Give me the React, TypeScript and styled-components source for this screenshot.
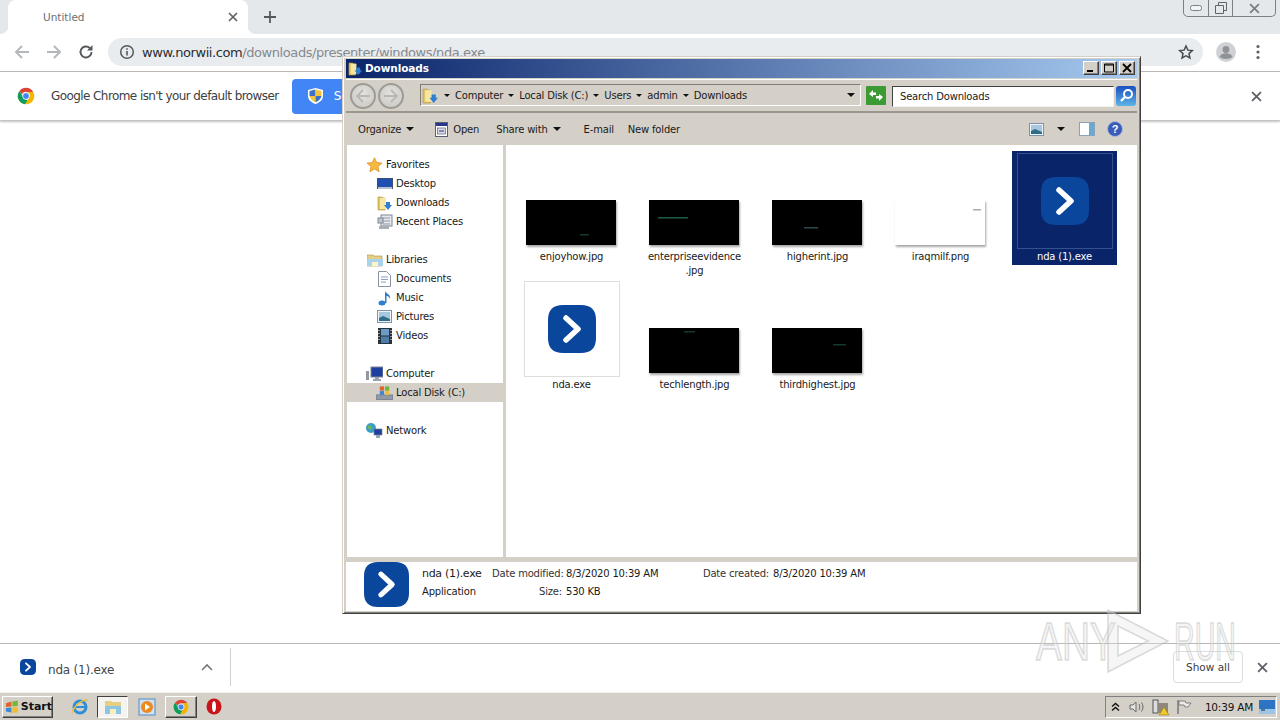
import React from "react";
import styled, { createGlobalStyle, css } from "styled-components";

const Global = createGlobalStyle`
  html, body { margin: 0; padding: 0; background: #fff; }
  * { box-sizing: border-box; }
  body { font-family: "Liberation Sans", Arial, sans-serif; }
`;

const UI = `"DejaVu Sans", "Liberation Sans", sans-serif`;
const raised = css`
  border: 1px solid;
  border-color: #fff #404040 #404040 #fff;
  box-shadow: inset -1px -1px 0 #808080;
`;

const Page = styled.div`
  position: relative;
  width: 1280px;
  height: 720px;
  overflow: hidden;
  display: flex;
  flex-direction: column;
  background: #fff;
  color: #222;
`;

/* Chrome */
const TabStrip = styled.div`
  height: 34px;
  flex: none;
  background: #e5e8eb;
  display: flex;
  align-items: flex-start;
  padding-left: 8px;
`;
const Tab = styled.div`
  position: relative;
  width: 240px;
  height: 34px;
  background: #fff;
  border-radius: 8px 8px 0 0;
  display: flex;
  align-items: center;
  padding: 0 10px 0 35px;
  color: #6b6f74;
  font-family: ${UI};
  font-size: 10.5px;
  &::before, &::after {
    content: "";
    position: absolute;
    bottom: 0;
    width: 8px;
    height: 8px;
  }
  &::before { left: -8px; background: radial-gradient(circle at 0 0, #e5e8eb 8px, #fff 8.5px); }
  &::after { right: -8px; background: radial-gradient(circle at 100% 0, #e5e8eb 8px, #fff 8.5px); }
`;
const TabTitle = styled.span` flex: 1; `;
const NewTab = styled.div`
  width: 16px;
  height: 34px;
  margin-left: 14px;
  display: flex;
  align-items: center;
  justify-content: center;
`;
const WinControls = styled.div`
  margin-left: auto;
  margin-right: 4px;
  width: 93px;
  height: 17px;
  border: 1px solid #7b8085;
  border-top: none;
  border-radius: 0 0 5px 5px;
  display: grid;
  grid-template-columns: 25px 24px 1fr;
`;
const WinCell = styled.div<{ $div?: boolean }>`
  display: flex;
  align-items: center;
  justify-content: center;
  ${(p) => p.$div && "border-right: 1px solid #7b8085;"}
`;
const Toolbar = styled.div`
  height: 38px;
  flex: none;
  background: #fff;
  border-bottom: 1px solid #bcbcbc;
  display: flex;
  align-items: flex-start;
  padding: 4px 0 0 6px;
`;
const NavIcon = styled.div<{ $w?: number }>`
  width: ${(p) => p.$w ?? 32}px;
  height: 28px;
  display: flex;
  align-items: center;
  justify-content: center;
  flex: none;
`;
const Pill = styled.div`
  margin-left: 6px;
  width: 1095px;
  height: 28px;
  border-radius: 14px;
  background: #e9ecef;
  display: flex;
  align-items: center;
  padding: 0 9px 0 11px;
`;
const Url = styled.div`
  flex: 1;
  margin-left: 7px;
  font-family: "DejaVu Sans", sans-serif;
  font-size: 13px;
  letter-spacing: -0.42px;
  color: #85898e;
  white-space: nowrap;
  b { font-weight: 400; color: #2b2d30; }
`;
const InfoBar = styled.div`
  height: 49px;
  flex: none;
  display: flex;
  align-items: center;
  padding: 0 16px 0 17px;
  background: #fff;
  border-bottom: 1px solid #c4c4c4;
  box-shadow: 0 1px 2px rgba(0, 0, 0, 0.25);
  font-family: ${UI};
  position: relative;
`;
const InfoText = styled.div`
  margin-left: 16px;
  font-size: 12px;
  letter-spacing: -0.58px;
  color: #3c4043;
  white-space: nowrap;
`;
const SetDefault = styled.div`
  margin-left: 13px;
  width: 140px;
  height: 35px;
  border-radius: 4px;
  background: #4285f4;
  color: #fff;
  display: flex;
  align-items: center;
  padding-left: 16px;
  font-size: 12px;
  gap: 11px;
`;
const InfoClose = styled.div`
  margin-left: auto;
  width: 16px;
  display: flex;
  justify-content: center;
`;
const Content = styled.div` flex: 1; background: #fff; `;

const DownloadBar = styled.div`
  height: 49px;
  flex: none;
  border-top: 1px solid #b8b8b8;
  display: flex;
  align-items: center;
  padding: 0 10px 2px 20px;
  font-family: ${UI};
`;
const DownloadName = styled.div`
  margin-left: 12px;
  width: 153px;
  padding-top: 5px;
  font-size: 12px;
  letter-spacing: -0.2px;
  color: #44474b;
`;
const Separator = styled.div`
  width: 1px;
  height: 38px;
  background: #d0d0d0;
  margin-left: 17px;
`;
const ShowAll = styled.div`
  margin-left: auto;
  width: 70px;
  height: 32px;
  border: 1px solid #dadce0;
  border-radius: 4px;
  display: flex;
  align-items: center;
  justify-content: center;
  font-size: 10.5px;
  color: #3c4043;
`;
const BarClose = styled.div`
  margin-left: 11px;
  width: 16px;
  display: flex;
  justify-content: center;
`;

/* Taskbar */
const Taskbar = styled.div`
  height: 28px;
  flex: none;
  background: #d4d0c8;
  border-top: 1px solid #f4f2ee;
  display: flex;
  align-items: center;
  padding: 0 3px 0 2px;
  font-family: ${UI};
`;
const StartBtn = styled.div`
  ${raised}
  width: 51px;
  height: 22px;
  display: flex;
  align-items: center;
  gap: 1px;
  padding-left: 2px;
  font-size: 11px;
  font-weight: 700;
  color: #111;
`;
const TaskItem = styled.div<{ $w: number; $gap: number; $state?: "on" | "off" }>`
  width: ${(p) => p.$w}px;
  height: 22px;
  margin-left: ${(p) => p.$gap}px;
  display: flex;
  align-items: center;
  justify-content: center;
  ${(p) => p.$state === "off" && raised}
  ${(p) =>
    p.$state === "on" &&
    css`
      border: 1px solid;
      border-color: #404040 #fff #fff #404040;
      background: #f5f3ef;
    `}
`;
const Tray = styled.div`
  margin-left: auto;
  width: 172px;
  height: 22px;
  border: 1px solid;
  border-color: #808080 #fff #fff #808080;
  display: flex;
  align-items: center;
  font-size: 10.5px;
  color: #111;
`;
const TrayIcon = styled.div<{ $w: number }>`
  width: ${(p) => p.$w}px;
  height: 18px;
  flex: none;
  display: flex;
  align-items: center;
  justify-content: center;
`;
const Clock = styled.div`
  width: 58px;
  margin-left: 4px;
  text-align: center;
  white-space: nowrap;
  letter-spacing: -0.2px;
`;

/* Explorer */
const Win = styled.div`
  position: absolute;
  left: 342px;
  top: 56px;
  width: 799px;
  height: 558px;
  background: #d4d0c8;
  border: 1px solid;
  border-color: #d4d0c8 #404040 #404040 #d4d0c8;
  box-shadow: inset 1px 1px 0 #fff, inset -1px -1px 0 #808080;
  padding: 2px 3px 2px 3px;
  display: flex;
  flex-direction: column;
  font-family: ${UI};
  font-size: 10px;
  letter-spacing: -0.19px;
  color: #1a1a1a;
`;
const Title = styled.div`
  height: 19px;
  flex: none;
  background: linear-gradient(90deg, #0a246a, #a6caf0);
  color: #fff;
  font-weight: 700;
  font-size: 10.5px;
  letter-spacing: -0.1px;
  display: flex;
  align-items: center;
  padding: 0 2px 1px 2px;
  gap: 2px;
`;
const TitleText = styled.span` flex: 1; `;
const TitleBtn = styled.div`
  ${raised}
  width: 16px;
  height: 14px;
  background: #d4d0c8;
  display: flex;
  align-items: center;
  justify-content: center;
`;
const NavBar = styled.div`
  height: 34px;
  flex: none;
  margin-top: 1px;
  border-top: 1px solid #fff;
  border-bottom: 2px solid #9a968e;
  display: flex;
  align-items: center;
  padding: 0 3px 1px 4px;
`;
const Round = styled.div<{ $gap?: number }>`
  width: 26px;
  height: 26px;
  margin-left: ${(p) => p.$gap ?? 0}px;
  margin-top: 2px;
  border-radius: 50%;
  border: 2px solid #9d9b96;
  background: radial-gradient(circle at 50% 40%, #e4e2de, #c9c6c0);
  display: flex;
  align-items: center;
  justify-content: center;
  flex: none;
`;
const Address = styled.div`
  margin-left: 16px;
  width: 441px;
  height: 22px;
  border: 1px solid;
  border-color: #807c74 #fff #fff #807c74;
  display: flex;
  align-items: center;
  padding: 0 3px 0 1px;
  font-size: 10px;
  flex: none;
`;
const Crumb = styled.span`
  display: inline-flex;
  align-items: center;
  gap: 5px;
  margin-left: 5px;
  white-space: nowrap;
`;
const Caret = styled.span<{ $size?: number; $ml?: number }>`
  display: inline-block;
  flex: none;
  margin-left: ${(p) => p.$ml ?? 0}px;
  border-left: ${(p) => p.$size ?? 3}px solid transparent;
  border-right: ${(p) => p.$size ?? 3}px solid transparent;
  border-top: ${(p) => p.$size ?? 3}px solid #111;
`;
const RefreshSlot = styled.div`
  margin-left: 5px;
  width: 20px;
  height: 19px;
  flex: none;
  line-height: 0;
`;
const Search = styled.div`
  margin: 2px 0 0 6px;
  width: 222px;
  height: 21px;
  background: #fff;
  border: 1px solid;
  border-color: #404040 #f4f4f4 #f4f4f4 #404040;
  display: flex;
  align-items: center;
  padding-left: 7px;
  flex: none;
`;
const SearchSlot = styled.div`
  margin: 1px 0 0 2px;
  width: 20px;
  height: 20px;
  flex: none;
  line-height: 0;
`;
const Commands = styled.div`
  height: 32px;
  flex: none;
  display: flex;
  align-items: center;
  padding: 0 14px 0 12px;
`;
const Cmd = styled.div<{ $gap?: number }>`
  display: flex;
  align-items: center;
  gap: 5px;
  margin-left: ${(p) => p.$gap ?? 0}px;
  white-space: nowrap;
`;
const CmdSpacer = styled.div` flex: 1; `;
const Body = styled.div`
  flex: 1;
  min-height: 0;
  display: flex;
  gap: 3px;
  padding-left: 1px;
`;
const Side = styled.div`
  width: 156px;
  background: #fff;
  padding-top: 10px;
  flex: none;
`;
const SideRow = styled.div<{ $child?: boolean; $sel?: boolean }>`
  height: 19px;
  display: flex;
  align-items: center;
  gap: 3px;
  padding-left: ${(p) => (p.$child ? 29 : 19)}px;
  ${(p) => p.$sel && "background: #d4d0c8;"}
`;
const SideIcon = styled.span`
  width: 17px;
  height: 16px;
  flex: none;
  display: flex;
  align-items: center;
  justify-content: center;
`;
const Files = styled.div`
  flex: 1;
  background: #fff;
  padding: 6px 0 0 4px;
  display: grid;
  grid-template-columns: repeat(4, 123px) 125px;
  grid-auto-rows: 128px;
  align-content: start;
`;
const Tile = styled.div<{ $sel?: boolean }>`
  width: 105px;
  height: 114px;
  justify-self: center;
  display: flex;
  flex-direction: column;
  align-items: center;
  padding-top: 2px;
  ${(p) => p.$sel && "background: #0a246a; color: #fff;"}
`;
const Frame = styled.div<{ $line?: "plain" | "sel" }>`
  width: 96px;
  height: 96px;
  flex: none;
  display: flex;
  align-items: center;
  justify-content: center;
  border: 1px solid transparent;
  ${(p) => p.$line === "plain" && "border-color: #dedede;"}
  ${(p) => p.$line === "sel" && "border-color: #33508f;"}
`;
const ThumbFrame = styled(Frame)`
  align-items: flex-end;
  padding: 0 2px 3px 0;
`;
const Thumb = styled.div<{ $bg?: string }>`
  width: 90px;
  height: 45px;
  background: ${(p) => p.$bg ?? "#000"};
  box-shadow: 1px 2px 2px rgba(0, 0, 0, 0.35);
  line-height: 0;
`;
const Label = styled.div`
  padding-top: 1px;
  line-height: 14px;
  text-align: center;
  white-space: nowrap;
`;
const StatusBar = styled.div`
  height: 53px;
  flex: none;
  margin-top: 1px;
  background: #fff;
  border-top: 4px solid #d4d0c8;
  display: flex;
  padding: 0 0 0 18px;
`;
const StatusGrid = styled.div`
  margin-left: 13px;
  display: grid;
  grid-template-columns: 70px 74px 136px 71px auto;
  grid-auto-rows: 18px;
  margin-top: 2px;
  align-items: center;
  white-space: nowrap;
`;
const StatusName = styled.div` font-size: 11px; letter-spacing: -0.3px; `;
const StatusKey = styled.div`
  text-align: right;
  padding-right: 4px;
  color: #333;
`;

/* Watermark */
const Watermark = styled.div`
  position: absolute;
  left: 1036px;
  top: 608px;
  width: 198px;
  height: 66px;
  display: flex;
  align-items: center;
  justify-content: space-between;
  pointer-events: none;
  font-family: "Liberation Sans", sans-serif;
  font-size: 54px;
  color: rgba(228, 228, 228, 0.35);
  -webkit-text-stroke: 1.6px rgba(190, 190, 190, 0.55);
`;
const MarkText = styled.span<{ $w: number; $scale: number }>`
  display: inline-block;
  width: ${(p) => p.$w}px;
  transform: scaleX(${(p) => p.$scale});
  transform-origin: left center;
  white-space: nowrap;
`;
const MarkLogo = styled.svg`
  position: absolute;
  left: 64px;
  top: 0;
`;

/* Icons */
const AppIcon = ({ size, fill = "#0a469c" }: { size: number; fill?: string }) => (
  <svg width={size} height={size} viewBox="0 0 48 48">
    <path d="M15 0h18c10 0 15 5 15 15v18c0 10-5 15-15 15H15C5 48 0 43 0 33V15C0 5 5 0 15 0z" fill={fill} />
    <path d="M18 13l12 11-12 11" fill="none" stroke="#fff" strokeWidth="5.5" strokeLinecap="round" strokeLinejoin="round" />
  </svg>
);
const Arrow = ({ dir, color }: { dir: "l" | "r"; color: string }) => (
  <svg width="16" height="16" viewBox="0 0 16 16" style={{ transform: dir === "r" ? "scaleX(-1)" : undefined }}>
    <path d="M15 8H2M8 2L2 8l6 6" fill="none" stroke={color} strokeWidth="1.9" />
  </svg>
);
const XIcon = ({ c = "#5f6368", s = 10 }: { c?: string; s?: number }) => (
  <svg width={s} height={s} viewBox="0 0 10 10">
    <path d="M1 1l8 8M9 1L1 9" stroke={c} strokeWidth="1.7" />
  </svg>
);
const ChromeLogo = ({ s = 18 }: { s?: number }) => (
  <svg width={s} height={s} viewBox="0 0 48 48">
    <path d="M24 2a22 22 0 0 1 19 11H24a11 11 0 0 0-10.5 7.5L6.6 10.5A22 22 0 0 1 24 2z" fill="#db4437" />
    <path d="M6.6 10.5l10 17A11 11 0 0 0 29 34.5L22 46A22 22 0 0 1 6.6 10.5z" fill="#0f9d58" />
    <path d="M43 13a22 22 0 0 1-21 33l9.5-16.5A11 11 0 0 0 33 17.5L24 13z" fill="#f4b400" />
    <circle cx="24" cy="24" r="9" fill="#4285f4" stroke="#fff" strokeWidth="2" />
  </svg>
);
const Folder = ({ s = 16, arrow = true }: { s?: number; arrow?: boolean }) => (
  <svg width={s} height={s} viewBox="0 0 16 16">
    <path d="M1 2h4l1 1h2v12H1z" fill="#e3c565" stroke="#b0913a" strokeWidth=".6" />
    <path d="M3 3h6v11H3z" fill="#f7e7a4" />
    {arrow && <path d="M9 7h4v3h2l-4 5-4-5h2z" fill="#2f7fd0" />}
  </svg>
);
const Shield = () => (
  <svg width="15" height="16" viewBox="0 0 15 16">
    <path d="M7.5 0L15 2v6c0 4-3.5 6.5-7.5 8C3.5 14.5 0 12 0 8V2z" fill="#fff" />
    <path d="M7.5 1.500V8H1.500V3z" fill="#3b6fc9" />
    <path d="M7.5 1.500L13.500 3V8H7.500z" fill="#f2c53d" />
    <path d="M1.500 8h6v6.200C4.500 13 2 11 1.500 8z" fill="#f2c53d" />
    <path d="M7.500 8h6c-.5 3-3 5-6 6.200z" fill="#3b6fc9" />
  </svg>
);
const Star = () => (
  <svg width="16" height="16" viewBox="0 0 24 24">
    <path d="M12 3l2.800 6.200 6.700.7-5 4.500 1.400 6.600L12 17.600 6.100 21l1.400-6.600-5-4.500 6.700-.7z" fill="none" stroke="#45484c" strokeWidth="2.200" />
  </svg>
);
const Avatar = () => (
  <svg width="20" height="20" viewBox="0 0 20 20">
    <circle cx="10" cy="10" r="10" fill="#cfd1d4" />
    <circle cx="10" cy="7.500" r="3.400" fill="#8f9296" />
    <path d="M3.500 15c1-3 4-3.800 6.500-3.800s5.500.8 6.500 3.800c-3 2.500-10 2.500-13 0z" fill="#8f9296" />
  </svg>
);
const Dots = () => (
  <svg width="4" height="16" viewBox="0 0 4 16">
    <circle cx="2" cy="2.500" r="1.600" fill="#5f6368" />
    <circle cx="2" cy="8" r="1.600" fill="#5f6368" />
    <circle cx="2" cy="13.500" r="1.600" fill="#5f6368" />
  </svg>
);
const Reload = () => (
  <svg width="16" height="16" viewBox="0 0 16 16">
    <path d="M13.500 8a5.500 5.500 0 1 1-1.700-4" fill="none" stroke="#55585c" strokeWidth="1.900" />
    <path d="M14.500 1v5.500H9z" fill="#55585c" />
  </svg>
);
const Info = () => (
  <svg width="16" height="16" viewBox="0 0 16 16">
    <circle cx="8" cy="8" r="6.300" fill="none" stroke="#55585c" strokeWidth="1.500" />
    <path d="M8 7v4.500M8 4.200v1.600" stroke="#55585c" strokeWidth="1.600" />
  </svg>
);
const Chevron = () => (
  <svg width="12" height="8" viewBox="0 0 12 8">
    <path d="M1 7l5-5 5 5" fill="none" stroke="#777" strokeWidth="1.600" />
  </svg>
);
const Plus = () => (
  <svg width="12" height="12" viewBox="0 0 12 12">
    <path d="M6 0v12M0 6h12" stroke="#55585c" strokeWidth="1.800" />
  </svg>
);
const FavStar = () => (
  <svg width="17" height="16" viewBox="0 0 24 24">
    <path d="M12 1l3.300 7.300 8 .8-6 5.300 1.700 7.800L12 18l-7 4.200 1.700-7.800-6-5.300 8-.8z" fill="#f6b93b" stroke="#d48a1f" strokeWidth="1" />
  </svg>
);
const Monitor = ({ c = "#1f4fb0" }: { c?: string }) => (
  <svg width="16" height="14" viewBox="0 0 16 14">
    <rect x="0" y="1" width="16" height="11" fill="#3d4f6e" />
    <rect x="1" y="2" width="14" height="8" fill={c} />
    <rect x="1" y="10" width="14" height="2" fill="#b9c2d0" />
  </svg>
);
const DocIcon = () => (
  <svg width="13" height="16" viewBox="0 0 13 16">
    <path d="M.5.500h8l4 4v11H.5z" fill="#fff" stroke="#8a93a3" />
    <path d="M3 6h7M3 8.500h7M3 11h5" stroke="#8ea0bc" />
  </svg>
);
const MusicIcon = () => (
  <svg width="14" height="16" viewBox="0 0 14 16">
    <ellipse cx="4" cy="13" rx="3.500" ry="2.500" fill="#2e7fcf" />
    <path d="M7 13V1c1 3 6 3 5 8-1-3-3-3-3.500-3V13z" fill="#2e7fcf" />
  </svg>
);
const PicIcon = ({ s = 15 }: { s?: number }) => (
  <svg width={s} height={s - 2} viewBox="0 0 15 13">
    <rect x=".5" y=".5" width="14" height="12" fill="#eef3f8" stroke="#7d93ab" />
    <rect x="2" y="2" width="11" height="9" fill="#a9c6e0" />
    <path d="M2 8l4-2 7 3v2H2z" fill="#2f6d88" />
  </svg>
);
const VideoIcon = () => (
  <svg width="14" height="16" viewBox="0 0 14 16">
    <rect width="14" height="16" fill="#27333f" />
    <rect x="3" y="1" width="8" height="6.500" fill="#6d9bc4" />
    <rect x="3" y="8.500" width="8" height="6.500" fill="#4e7da6" />
    <path d="M1 2v1M1 5v1M1 8v1M1 11v1M13 2v1M13 5v1M13 8v1M13 11v1" stroke="#fff" />
  </svg>
);
const LibIcon = () => (
  <svg width="16" height="14" viewBox="0 0 16 14">
    <path d="M0 2h6l1 1h8v10H0z" fill="#e4cf85" stroke="#a89248" strokeWidth=".6" />
    <path d="M0 6h16v7H0z" fill="#a9d3ea" />
    <path d="M5 13V9h6v4" fill="#fdf5c9" />
  </svg>
);
const RecentIcon = () => (
  <svg width="16" height="16" viewBox="0 0 16 16">
    <rect x="4" y="1" width="11" height="11" fill="#e6e8ec" stroke="#7f8895" />
    <path d="M6 4h7M6 7h7M6 10h7" stroke="#8e99a8" />
    <rect x="1" y="4" width="5" height="5" fill="#bfc6d0" stroke="#7f8895" />
    <rect x="2" y="12" width="10" height="3" fill="#a8afb9" />
  </svg>
);
const ComputerIcon = () => (
  <svg width="17" height="16" viewBox="0 0 17 16">
    <rect x="0" y="5" width="3" height="9" fill="#8f97a3" />
    <rect x="5" y="1" width="12" height="10" fill="#1d3f9e" stroke="#7d8592" />
    <path d="M9 11h4v2h2v2H7v-2h2z" fill="#9aa2ae" />
  </svg>
);
const DiskIcon = () => (
  <svg width="18" height="16" viewBox="0 0 18 16">
    <rect x="0" y="10" width="18" height="5" fill="#8f9aa6" stroke="#5e6772" strokeWidth=".6" />
    <rect x="4" y="1" width="4.500" height="4.500" fill="#e0662f" />
    <rect x="9.500" y="1" width="4.500" height="4.500" fill="#6fb33b" />
    <rect x="4" y="6" width="4.500" height="4" fill="#3f83d6" />
    <rect x="9.500" y="6" width="4.500" height="4" fill="#f0bf32" />
  </svg>
);
const NetworkIcon = () => (
  <svg width="17" height="16" viewBox="0 0 17 16">
    <circle cx="5" cy="5" r="5" fill="#3b9dc9" />
    <path d="M2 3c2-1 4 0 4 2s-3 2-4 0z" fill="#69b85a" />
    <rect x="8" y="6" width="8" height="6" fill="#1d3f9e" stroke="#7d8592" strokeWidth=".7" />
    <rect x="10" y="12" width="4" height="3" fill="#9aa2ae" />
  </svg>
);
const OpenIcon = () => (
  <svg width="13" height="15" viewBox="0 0 13 15">
    <rect x=".5" y=".5" width="12" height="14" fill="#fff" stroke="#5d5d70" />
    <rect x="1" y="1" width="11" height="3" fill="#27378c" />
    <rect x="2.500" y="6" width="8" height="6" fill="#d9d9e4" stroke="#5d5d70" strokeWidth=".7" />
    <path d="M4 9h5" stroke="#27378c" />
  </svg>
);
const Refresh = () => (
  <svg width="20" height="19" viewBox="0 0 20 19">
    <rect width="20" height="19" rx="1" fill="#3c9a35" />
    <path d="M3 8l4-4v2.500h3V9H7v2zM17 11l-4 4v-2.500h-3V10h3V8z" fill="#fff" />
  </svg>
);
const SearchBtn = () => (
  <svg width="20" height="20" viewBox="0 0 20 20">
    <defs>
      <linearGradient id="sb" x1="0" x2="0" y1="0" y2="1">
        <stop offset="0" stopColor="#1a4fc0" />
        <stop offset="1" stopColor="#5db4e8" />
      </linearGradient>
    </defs>
    <rect width="20" height="20" rx="3" fill="url(#sb)" />
    <circle cx="12" cy="8" r="4" fill="none" stroke="#fff" strokeWidth="2" />
    <path d="M9 11l-4 4" stroke="#fff" strokeWidth="2.400" />
  </svg>
);
const Help = () => (
  <svg width="16" height="16" viewBox="0 0 16 16">
    <circle cx="8" cy="8" r="7.500" fill="#3a5bb8" stroke="#a8b6dd" />
    <text x="8" y="12" textAnchor="middle" fontSize="11" fontWeight="700" fill="#fff" fontFamily="Liberation Sans">?</text>
  </svg>
);
const Pane = () => (
  <svg width="16" height="14" viewBox="0 0 16 14">
    <rect x=".5" y=".5" width="15" height="13" fill="#fff" stroke="#8aa3bb" />
    <rect x="10" y="1" width="5" height="12" fill="#6aa9cf" />
  </svg>
);
const WinFlag = () => (
  <svg width="16" height="16" viewBox="0 0 16 16">
    <path d="M1 4l6-2v5.500L1 8z" fill="#e5622a" />
    <path d="M8 2l6-1v6l-6 .5z" fill="#7ab53c" />
    <path d="M1 9l6-.5V14l-6-1z" fill="#3b87d8" />
    <path d="M8 8.500l6-.5v6l-6 .5z" fill="#f1bd2f" />
  </svg>
);
const IEIcon = () => (
  <svg width="18" height="18" viewBox="0 0 18 18">
    <circle cx="9" cy="9" r="6" fill="none" stroke="#2f8ed6" strokeWidth="3" />
    <path d="M4 9h10" stroke="#2f8ed6" strokeWidth="2" />
    <path d="M1 15C3 8 11 1 17 2" fill="none" stroke="#efbf36" strokeWidth="1.500" />
  </svg>
);
const ExplorerIcon = () => (
  <svg width="16" height="16" viewBox="0 0 16 16">
    <path d="M0 2h6l1 1h9v12H0z" fill="#e4cf85" />
    <path d="M0 7h16v8H0z" fill="#8cc6e3" />
    <path d="M5 15v-5h6v5" fill="#f9efbd" />
  </svg>
);
const MediaIcon = () => (
  <svg width="18" height="18" viewBox="0 0 18 18">
    <rect x="1" y="1" width="16" height="16" fill="#cfe2f3" stroke="#4f8cc4" />
    <circle cx="9" cy="9" r="6" fill="#ed8a1f" />
    <path d="M7 5.500l5 3.500-5 3.500z" fill="#fff" />
  </svg>
);
const OperaIcon = () => (
  <svg width="16" height="17" viewBox="0 0 16 17">
    <ellipse cx="8" cy="8.500" rx="7.500" ry="8" fill="#c8151c" />
    <ellipse cx="8" cy="8.500" rx="2" ry="5.500" fill="#fff" />
  </svg>
);
const TrayChevron = () => (
  <svg width="9" height="10" viewBox="0 0 9 10">
    <path d="M1 4.500l3.500-3 3.500 3M1 8.500l3.500-3 3.500 3" fill="none" stroke="#111" strokeWidth="1.400" />
  </svg>
);
const Speaker = () => (
  <svg width="16" height="16" viewBox="0 0 16 16">
    <path d="M1 6h3l3-3v10l-3-3H1z" fill="#e4e4e4" stroke="#6a6a6a" />
    <path d="M10 5c1 2 1 4 0 6M12.500 3.500c2 3 2 6 0 9" fill="none" stroke="#6a6a6a" />
  </svg>
);
const NetTray = () => (
  <svg width="18" height="18" viewBox="0 0 18 18">
    <rect x="1" y="2" width="5" height="13" fill="#ddd" stroke="#555" />
    <rect x="6" y="5" width="10" height="10" fill="#8f877c" />
    <path d="M12 9l5 8H7z" fill="#f2c82e" stroke="#8a6d00" strokeWidth=".5" />
  </svg>
);
const Flag = () => (
  <svg width="16" height="16" viewBox="0 0 16 16">
    <path d="M2 1v14" stroke="#6a6a6a" strokeWidth="1.300" />
    <path d="M3 2h6l1 2h5l-3 4H9L8 6H3z" fill="#eceae6" stroke="#6a6a6a" strokeWidth=".8" />
  </svg>
);
const DesktopTray = () => (
  <svg width="16" height="14" viewBox="0 0 16 14">
    <rect width="16" height="14" fill="#2d74c4" />
    <rect y="9" width="16" height="5" fill="#9cc3e8" />
    <path d="M2 10h4" stroke="#123" />
  </svg>
);
const Streak = ({ x, y, w, c = "#16382c" }: { x: number; y: number; w: number; c?: string }) => (
  <svg width="90" height="45" viewBox="0 0 90 45">
    <rect x={x} y={y} width={w} height="1.500" fill={c} />
  </svg>
);
const WinGlyph = ({ k }: { k: "min" | "max" | "close" }) => (
  <svg width="10" height="10" viewBox="0 0 10 10">
    {k === "min" && <rect x="1" y="7" width="6" height="2" fill="#000" />}
    {k === "max" && <path d="M.5 1h9v8h-9zM.5 2h9" fill="none" stroke="#000" />}
    {k === "close" && <path d="M1 1l8 8M9 1L1 9" stroke="#000" strokeWidth="1.800" />}
  </svg>
);

const Crumbs = ["Computer", "Local Disk (C:)", "Users", "admin", "Downloads"];

type Row = { t?: string; icon?: React.ReactNode; child?: boolean; sel?: boolean };
const rows: Row[] = [
  { t: "Favorites", icon: <FavStar /> },
  { t: "Desktop", icon: <Monitor />, child: true },
  { t: "Downloads", icon: <Folder />, child: true },
  { t: "Recent Places", icon: <RecentIcon />, child: true },
  {},
  { t: "Libraries", icon: <LibIcon /> },
  { t: "Documents", icon: <DocIcon />, child: true },
  { t: "Music", icon: <MusicIcon />, child: true },
  { t: "Pictures", icon: <PicIcon />, child: true },
  { t: "Videos", icon: <VideoIcon />, child: true },
  {},
  { t: "Computer", icon: <ComputerIcon /> },
  { t: "Local Disk (C:)", icon: <DiskIcon />, child: true, sel: true },
  {},
  { t: "Network", icon: <NetworkIcon /> },
];

const ImageTile = ({ label, streak, bg }: { label: React.ReactNode; streak: React.ReactNode; bg?: string }) => (
  <Tile>
    <ThumbFrame>
      <Thumb $bg={bg}>{streak}</Thumb>
    </ThumbFrame>
    <Label>{label}</Label>
  </Tile>
);

export default function App() {
  return (
    <Page>
      <Global />
      <TabStrip>
        <Tab>
          <TabTitle>Untitled</TabTitle>
          <XIcon />
        </Tab>
        <NewTab>
          <Plus />
        </NewTab>
        <WinControls>
          <WinCell $div>
            <svg width="12" height="6" viewBox="0 0 12 6"><rect x=".5" y=".5" width="11" height="5" rx="2" fill="#f3f4f5" stroke="#7b8085" /></svg>
          </WinCell>
          <WinCell $div>
            <svg width="12" height="12" viewBox="0 0 12 12"><path d="M3.500 3V.5h8v8H9M.5 3.500h8v8h-8z" fill="none" stroke="#5f6469" /></svg>
          </WinCell>
          <WinCell>
            <XIcon c="#7b8085" s={11} />
          </WinCell>
        </WinControls>
      </TabStrip>
      <Toolbar>
        <NavIcon><Arrow dir="l" color="#b4b7bb" /></NavIcon>
        <NavIcon><Arrow dir="r" color="#b4b7bb" /></NavIcon>
        <NavIcon><Reload /></NavIcon>
        <Pill>
          <Info />
          <Url><b>www.norwii.com</b>/downloads/presenter/windows/nda.exe</Url>
          <Star />
        </Pill>
        <NavIcon $w={46}><Avatar /></NavIcon>
        <NavIcon $w={18}><Dots /></NavIcon>
      </Toolbar>
      <InfoBar>
        <ChromeLogo />
        <InfoText>Google Chrome isn't your default browser</InfoText>
        <SetDefault><Shield />Set as default</SetDefault>
        <InfoClose><XIcon s={11} /></InfoClose>
      </InfoBar>
      <Content />
      <DownloadBar>
        <AppIcon size={16} />
        <DownloadName>nda (1).exe</DownloadName>
        <Chevron />
        <Separator />
        <ShowAll>Show all</ShowAll>
        <BarClose><XIcon s={11} /></BarClose>
      </DownloadBar>
      <Taskbar>
        <StartBtn><WinFlag />Start</StartBtn>
        <TaskItem $w={24} $gap={15}><IEIcon /></TaskItem>
        <TaskItem $w={31} $gap={5} $state="on"><ExplorerIcon /></TaskItem>
        <TaskItem $w={24} $gap={7}><MediaIcon /></TaskItem>
        <TaskItem $w={32} $gap={6} $state="off"><ChromeLogo s={16} /></TaskItem>
        <TaskItem $w={24} $gap={5}><OperaIcon /></TaskItem>
        <Tray>
          <TrayIcon $w={18}><TrayChevron /></TrayIcon>
          <TrayIcon $w={26}><Speaker /></TrayIcon>
          <TrayIcon $w={22}><NetTray /></TrayIcon>
          <TrayIcon $w={24}><Flag /></TrayIcon>
          <Clock>10:39 AM</Clock>
          <TrayIcon $w={18}><DesktopTray /></TrayIcon>
        </Tray>
      </Taskbar>

      <Win>
        <Title>
          <Folder s={15} />
          <TitleText>Downloads</TitleText>
          <TitleBtn><WinGlyph k="min" /></TitleBtn>
          <TitleBtn><WinGlyph k="max" /></TitleBtn>
          <TitleBtn><WinGlyph k="close" /></TitleBtn>
        </Title>
        <NavBar>
          <Round><Arrow dir="l" color="#b8b8b4" /></Round>
          <Round $gap={2}><Arrow dir="r" color="#b8b8b4" /></Round>
          <Address>
            <Folder s={17} />
            {Crumbs.map((c) => (
              <Crumb key={c}><Caret />{c}</Crumb>
            ))}
            <Caret $size={4} $ml={100} />
          </Address>
          <RefreshSlot><Refresh /></RefreshSlot>
          <Search>Search Downloads</Search>
          <SearchSlot><SearchBtn /></SearchSlot>
        </NavBar>
        <Commands>
          <Cmd>Organize<Caret $size={4} /></Cmd>
          <Cmd $gap={21}><OpenIcon />Open</Cmd>
          <Cmd $gap={17}>Share with<Caret $size={4} /></Cmd>
          <Cmd $gap={23}>E-mail</Cmd>
          <Cmd $gap={14}>New folder</Cmd>
          <CmdSpacer />
          <PicIcon s={15} />
          <Caret $size={4} $ml={13} />
          <Cmd $gap={14}><Pane /></Cmd>
          <Cmd $gap={12}><Help /></Cmd>
        </Commands>
        <Body>
          <Side>
            {rows.map((r, i) => (
              <SideRow key={i} $child={r.child} $sel={r.sel}>
                {r.icon && <SideIcon>{r.icon}</SideIcon>}
                {r.t}
              </SideRow>
            ))}
          </Side>
          <Files>
            <ImageTile label="enjoyhow.jpg" streak={<Streak x={54} y={34} w={9} />} />
            <ImageTile
              label={<>enterpriseevidence<br />.jpg</>}
              streak={<Streak x={9} y={17} w={30} c="#1f5a48" />}
            />
            <ImageTile label="higherint.jpg" streak={<Streak x={32} y={27} w={14} c="#2a4a50" />} />
            <ImageTile label="iraqmilf.png" bg="#fff" streak={<Streak x={78} y={9} w={8} c="#aaa" />} />
            <Tile $sel>
              <Frame $line="sel"><AppIcon size={48} /></Frame>
              <Label>nda (1).exe</Label>
            </Tile>
            <Tile>
              <Frame $line="plain"><AppIcon size={48} /></Frame>
              <Label>nda.exe</Label>
            </Tile>
            <ImageTile label="techlength.jpg" streak={<Streak x={35} y={3} w={11} />} />
            <ImageTile label="thirdhighest.jpg" streak={<Streak x={61} y={16} w={13} />} />
          </Files>
        </Body>
        <StatusBar>
          <AppIcon size={45} />
          <StatusGrid>
            <StatusName>nda (1).exe</StatusName>
            <StatusKey>Date modified:</StatusKey>
            <div>8/3/2020 10:39 AM</div>
            <StatusKey>Date created:</StatusKey>
            <div>8/3/2020 10:39 AM</div>
            <div>Application</div>
            <StatusKey>Size:</StatusKey>
            <div>530 KB</div>
          </StatusGrid>
        </StatusBar>
      </Win>

      <Watermark>
        <MarkText $w={64} $scale={0.72}>ANY</MarkText>
        <MarkLogo width="72" height="66" viewBox="0 0 72 66">
          <path d="M8 2v62l60-31z M18 18v30l30-15z" fill="rgba(228,228,228,.35)" fillRule="evenodd" stroke="rgba(190,190,190,.55)" strokeWidth="1.600" />
        </MarkLogo>
        <MarkText $w={60} $scale={0.53}>RUN</MarkText>
      </Watermark>
    </Page>
  );
}
